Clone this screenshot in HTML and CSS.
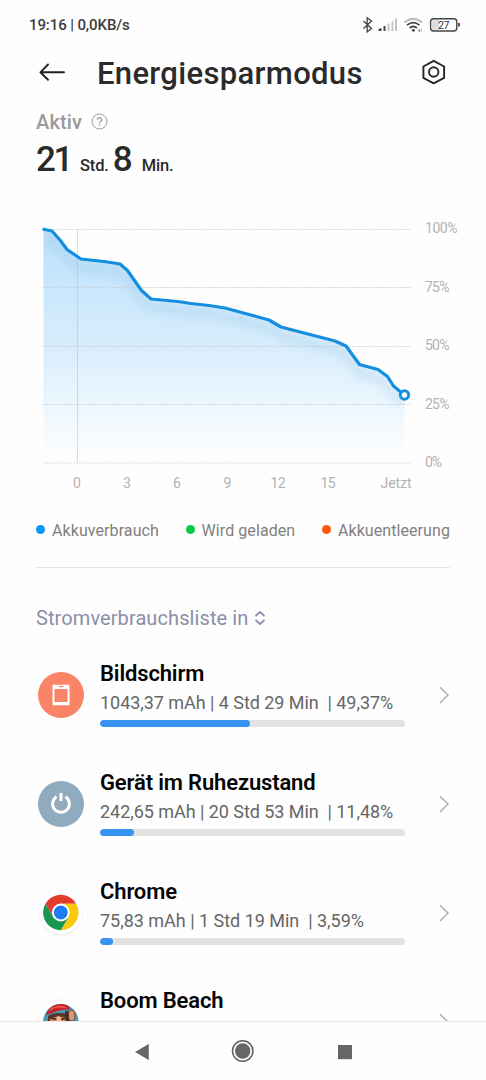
FILE: index.html
```html
<!DOCTYPE html>
<html lang="de">
<head>
<meta charset="utf-8">
<title>Energiesparmodus</title>
<link rel="stylesheet" href="styles.css">
</head>
<body>
<div class="phone">
  <header class="status">
    <span class="clock">19:16 | 0,0KB/s</span>
    <svg class="status-icons" width="104" height="20" viewBox="360 15 104 20" fill="none">
      <path d="M363.500 21l8 7.500-4.300 3.500V17.700l4.300 3.300-8 7.500" stroke="#444" stroke-width="1.300"/>
      <path d="M378.500 31v-2l3-1v3z M383.500 31v-5h2v5z" fill="#444"/>
      <path d="M387.500 31v-7.500h2V31z M391.500 31V21h1.800v10z M395 31V18.500h2V31z" fill="#c4c4c4"/>
      <path d="M404.500 22.500q9-7.500 17.500 0" stroke="#bbb" stroke-width="1.700"/>
      <path d="M407 25.200q6.300-5 12.500 0M409.600 28q3.700-3 7.400 0" stroke="#444" stroke-width="1.700"/>
      <circle cx="413.300" cy="30.300" r="1.400" fill="#444"/>
      <path d="M418 30.500l1.800-1.500v3zM421.500 28.500v3" fill="#777" stroke="#999" stroke-width=".6"/>
      <rect x="432" y="19.500" width="7" height="10.500" fill="#ddd"/>
      <rect x="430.600" y="18.800" width="26.200" height="12.200" rx="3" stroke="#444" stroke-width="1.400"/>
      <path d="M459 23v3.600" stroke="#444" stroke-width="1.800"/>
      <text x="438" y="28.900" class="battery-text" textLength="11.500">27</text>
    </svg>
  </header>

  <div class="title-row">
    <svg class="back" width="28" height="24" viewBox="38 61 28 24" fill="none" stroke="#222" stroke-width="1.900" stroke-linecap="round" stroke-linejoin="round"><path d="M64 72.300H40.500M48 64.500l-7.600 7.800 7.600 7.500"/></svg>
    <h1 class="title">Energiesparmodus</h1>
    <svg class="gear" width="26" height="28" viewBox="421 59 26 28" fill="none" stroke="#262626" stroke-width="1.900" stroke-linejoin="round"><path d="M433.700 60.800l10.400 5.700v11.400l-10.400 5.500-10.300-5.500V66.500z"/><circle cx="433.700" cy="72" r="4.700"/></svg>
  </div>

  <section class="summary">
    <div class="active-row"><span class="active-label">Aktiv</span>
      <svg width="18" height="18" viewBox="0 0 18 18" fill="none" stroke="#999"><circle cx="8.500" cy="8.500" r="7.500"/><path d="M6.300 6.700a2.200 2.200 0 1 1 3.300 2c-.8.500-1.100.8-1.100 1.700" stroke-width="1.200"/><path d="M8.500 11.600v1.300" stroke-width="1.300"/></svg>
    </div>
    <div class="duration"><span class="num hours">21</span><span class="unit">Std.</span><span class="num mins">8</span><span class="unit">Min.</span></div>
  </section>

  <svg class="chart" width="486" height="290" viewBox="0 210 486 290">
    <defs>
      <linearGradient id="area" x1="0" y1="229" x2="0" y2="463" gradientUnits="userSpaceOnUse"><stop offset="0" stop-color="#b9e0fb"/><stop offset=".5" stop-color="#d8edfc"/><stop offset=".8" stop-color="#f0f8fe"/><stop offset="1" stop-color="#fefefe"/></linearGradient>
      <clipPath id="under"><path d="M43.500 229L52 231 60 240 67 249.500 81 259 104 261.500 120 264 127.500 270.500 141.500 290.500 151 299 178 301.500 191 303.500 209 305.500 225 308 249 314.500 269 320 281 327 308 334 335 341 346 346 359.500 364.500 378 369.500 387.500 376.500 393.500 386 404.500 395V463H43.500z"/></clipPath>
      <filter id="soft" x="-10%" y="-20%" width="120%" height="140%"><feGaussianBlur stdDeviation="4"/></filter>
    </defs>
    <path class="area" d="M43.500 229L52 231 60 240 67 249.500 81 259 104 261.500 120 264 127.500 270.500 141.500 290.500 151 299 178 301.500 191 303.500 209 305.500 225 308 249 314.500 269 320 281 327 308 334 335 341 346 346 359.500 364.500 378 369.500 387.500 376.500 393.500 386 404.500 395V463H43.500z"/>
    <path class="grid" d="M43 229.500H411M43 287.500H411M43 346.500H411M43 404.500H411M43 463H411"/>
    <path d="M77.500 229V463" stroke="#acbecb" stroke-opacity=".5"/>
    <g clip-path="url(#under)"><path transform="translate(0 9)" filter="url(#soft)" class="shadow" d="M43.500 229L52 231 60 240 67 249.500 81 259 104 261.500 120 264 127.500 270.500 141.500 290.500 151 299 178 301.500 191 303.500 209 305.500 225 308 249 314.500 269 320 281 327 308 334 335 341 346 346 359.500 364.500 378 369.500 387.500 376.500 393.500 386 404.500 395"/></g>
    <path class="line" d="M42.500 229L52 231 60 240 67 249.500 81 259 104 261.500 120 264 127.500 270.500 141.500 290.500 151 299 178 301.500 191 303.500 209 305.500 225 308 249 314.500 269 320 281 327 308 334 335 341 346 346 359.500 364.500 378 369.500 387.500 376.500 393.500 386 402 393"/>
    <circle cx="404.500" cy="395" r="4.200" fill="#fff" stroke="#1590e3" stroke-width="3"/>
    <g class="axis">
      <text x="425" y="233" textLength="32.500">100%</text><text x="425" y="291.500" textLength="24.500">75%</text><text x="425" y="350" textLength="24.500">50%</text><text x="425" y="408.500" textLength="24.500">25%</text><text x="425" y="467" textLength="17">0%</text>
      <g text-anchor="middle"><text x="77" y="488">0</text><text x="127" y="488">3</text><text x="177" y="488">6</text><text x="227.500" y="488">9</text><text x="278" y="488" textLength="15">12</text><text x="328" y="488" textLength="15">15</text><text x="396" y="488" textLength="31">Jetzt</text></g>
    </g>
  </svg>

  <div class="legend">
    <span class="key"><i class="dot blue"></i>Akkuverbrauch</span>
    <span class="key"><i class="dot green"></i>Wird geladen</span>
    <span class="key"><i class="dot orange"></i>Akkuentleerung</span>
  </div>

  <div class="list-title">Stromverbrauchsliste in
    <svg width="12" height="16" viewBox="0 0 12 16" fill="none" stroke="#8a8fa8" stroke-width="1.700"><path d="M1.500 6L6 2l4.500 4M1.500 10L6 14l4.500-4"/></svg>
  </div>

  <main class="list">
    <div class="row">
      <svg class="app-icon" width="46" height="46" viewBox="0 0 46 46"><circle cx="23" cy="23" r="23" fill="#f98467"/><path fill="#fff" fill-rule="evenodd" d="M14.500 12.700h17v20.600h-17zM16.500 17v13h13V17zM20.800 14v1.300h4.500V14z"/></svg>
      <div class="body"><div class="name">Bildschirm</div><div class="meta">1043,37 mAh | 4 Std 29 Min&nbsp; | 49,37%</div><div class="track"><div class="fill" style="width:49.2%"></div></div></div>
      <svg class="chev" width="12" height="18" viewBox="0 0 12 18"><path d="M2 1.200L10 9l-8 8"/></svg>
    </div>
    <div class="row">
      <svg class="app-icon" width="46" height="46" viewBox="0 0 46 46"><circle cx="23" cy="23" r="23" fill="#8fabbd"/><path d="M18.500 15.800a8.400 8.400 0 1 0 9 0M23 12v8" fill="none" stroke="#fff" stroke-width="3"/></svg>
      <div class="body"><div class="name">Gerät im Ruhezustand</div><div class="meta">242,65 mAh | 20 Std 53 Min&nbsp; | 11,48%</div><div class="track"><div class="fill" style="width:11.1%"></div></div></div>
      <svg class="chev" width="12" height="18" viewBox="0 0 12 18"><path d="M2 1.200L10 9l-8 8"/></svg>
    </div>
    <div class="row">
      <svg class="app-icon" width="46" height="46" viewBox="0 0 46 46"><circle cx="22.800" cy="23.200" r="22" fill="#dedede"/><circle cx="22.800" cy="22.500" r="22" fill="#fff"/>
        <path d="M7.490 13.660A17.700 17.700 0 0 1 38.130 13.660H22.800L15.100 27z" fill="#e33b2e"/><path d="M38.130 13.660A17.700 17.700 0 0 1 22.800 40.200L30.500 26.900 22.800 13.660z" fill="#fbc90b"/><path d="M22.800 40.200A17.700 17.700 0 0 1 7.490 13.660L15.100 26.950 22.800 31.300 30.500 26.900z" fill="#16974f"/><circle cx="22.800" cy="22.500" r="8.900" fill="#fff"/><circle cx="22.800" cy="22.500" r="6.900" fill="#1e7bf2"/></svg>
      <div class="body"><div class="name">Chrome</div><div class="meta last-meta">75,83 mAh | 1 Std 19 Min&nbsp; | 3,59%</div><div class="track"><div class="fill" style="width:4.1%"></div></div></div>
      <svg class="chev" width="12" height="18" viewBox="0 0 12 18"><path d="M2 1.200L10 9l-8 8"/></svg>
    </div>
    <div class="row">
      <svg class="app-icon" width="46" height="46" viewBox="0 0 46 46"><defs><clipPath id="face"><circle cx="22.800" cy="22.700" r="17.700"/></clipPath></defs><circle cx="22.800" cy="22.700" r="22" fill="#fff" stroke="#f1f1f1" stroke-width=".7"/>
        <g clip-path="url(#face)"><path fill="#4c9ab0" d="M0 0h46v46H0z"/><path fill="#583629" d="M10 17q7-5 19-2l6 5v22H10z"/><path fill="#d98b62" d="M12 20q8-4 16-1l1 24H13z"/><ellipse cx="33.500" cy="16.500" rx="3.500" ry="5.500" fill="#dc9772" stroke="#71402e"/><path fill="#4c3027" d="M27 12h3.500l1 15h-4zM13 18.500l6 1v1.700l-6-1.200zM22 19.700l5-1.500v2l-5 1.500z"/><path fill="#f3b88b" d="M18.500 18l2-1 2 1 2 8h-6z"/><path fill="#c8242b" d="M8 16.500Q11 4 25 5q7 1 7 5.500-10-1-24 6z"/><path fill="none" stroke="#ef5b51" stroke-width="1.500" d="M12 11q6-5 16-2.500"/></g></svg>
      <div class="body"><div class="name">Boom Beach</div></div>
      <svg class="chev" width="12" height="18" viewBox="0 0 12 18"><path d="M2 1.200L10 9l-8 8"/></svg>
    </div>
  </main>

  <nav class="nav">
    <svg width="486" height="58" viewBox="0 1022 486 58" fill="#666"><path d="M135 1052l13.800-8v16z"/><circle cx="242.700" cy="1051" r="10.200" fill="none" stroke="#5e5e5e" stroke-width="1.500"/><circle cx="242.700" cy="1051" r="7.700"/><path d="M338 1045h14v14.200h-14z"/></svg>
  </nav>
</div>
</body>
</html>
```
FILE: styles.css
```css
* { box-sizing: border-box; }
body { margin: 0; background: #fff; font-family: Roboto, "Liberation Sans", sans-serif; }
svg { display: block; flex: none; }
.phone { width: 486px; height: 1080px; display: flex; flex-direction: column; overflow: hidden; background: #fefefe; white-space: nowrap; }
.status { height: 50px; padding: 0 22px 0 29px; display: flex; align-items: center; justify-content: space-between; flex: none; }
.clock { font-size: 15px; font-weight: 500; line-height: 20px; color: #3c3c3c; letter-spacing: -.1px; }
.battery-text { font: 400 10.500px Roboto, sans-serif; fill: #333; }
.title-row { height: 46px; display: flex; align-items: center; padding: 0 39px 0 38px; flex: none; }
.title { margin: 2px auto 0 31px; font-size: 31px; line-height: 40px; font-weight: 500; color: #2b2b2b; letter-spacing: .33px; }
.summary { padding-left: 36px; height: 114px; flex: none; }
.active-row { display: flex; gap: 9px; align-items: center; margin-top: 14px; height: 24px; }
.active-label { font-size: 20px; font-weight: 500; line-height: 24px; color: #999; letter-spacing: .15px; }
.duration { display: flex; align-items: baseline; height: 46px; line-height: 46px; margin-top: 3px; color: #2a2a2a; }
.num { font-size: 35px; font-weight: 500; }
.hours { width: 44px; letter-spacing: -2.500px; }
.mins { margin: 0 9px 0 4px; }
.unit { font-size: 16.500px; font-weight: 500; letter-spacing: -.15px; }
.area { fill: url(#area); }
.grid { fill: none; stroke: #c9ced2; stroke-dasharray: 1.500 1.500; }
.shadow { fill: none; stroke: #7fb5dc; stroke-opacity: .27; stroke-width: 7; }
.line { fill: none; stroke: #158ee0; stroke-width: 3.200; stroke-linejoin: round; }
.axis { font: 400 14px Roboto, sans-serif; fill: #b2b2b2; }
.legend { display: flex; justify-content: space-between; height: 68px; margin: 0 36px; padding-top: 20px; border-bottom: 1px solid #e6e6e6; flex: none; }
.key { display: flex; gap: 7px; font-size: 16px; line-height: 22px; color: #808080; letter-spacing: .08px; }
.dot { width: 9px; height: 9px; border-radius: 50%; margin-top: 5px; }
.blue { background: #0897f5; }
.green { background: #0bc846; }
.orange { background: #ff580e; }
.list-title { display: flex; align-items: center; gap: 6px; height: 40px; margin: 30px 0 0 36px; font-size: 20px; letter-spacing: .09px; color: #8a8fa8; flex: none; }
.list { flex: 1; min-height: 0; overflow: hidden; padding: 22px 36px 0 38px; }
.row { display: flex; height: 109px; }
.app-icon { margin-top: 12px; }
.body { width: 305px; margin: 0 33px 0 16px; flex: none; }
.name { font-size: 22px; line-height: 28px; font-weight: 600; color: #050505; letter-spacing: -.14px; }
.meta { font-size: 18px; line-height: 24px; margin-top: 3px; color: #666; letter-spacing: -.05px; }
.last-meta { letter-spacing: -.02px; }
.track { height: 7px; margin-top: 5px; border-radius: 4px; background: #e3e3e3; overflow: hidden; }
.fill { height: 100%; border-radius: 4px; background: #3693f3; }
.chev { margin-top: 26px; fill: none; stroke: #aaa; stroke-width: 1.400; }
.nav { height: 59px; border-top: 1px solid #eaeaea; flex: none; background: #fefefe; }
```
